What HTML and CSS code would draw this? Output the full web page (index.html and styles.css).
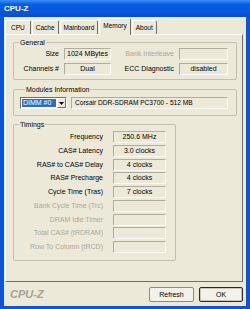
FILE: index.html
```html
<!DOCTYPE html>
<html lang="en">
<head>
    <meta charset="UTF-8">
    <meta name="viewport" content="width=device-width, initial-scale=1.0">
    <title>CPU-Z</title>
    <link rel="stylesheet" href="styles.css">
</head>
<body>
    <div class="window">
        <div class="titlebar">CPU-Z</div>
        <div class="client">
            <div class="tabs">
                <span class="tab cpu">CPU</span>
                <span class="tab">Cache</span>
                <span class="tab">Mainboard</span>
                <span class="tab active">Memory</span>
                <span class="tab">About</span>
            </div>
            <div class="panel">
                <fieldset class="group general">
                    <legend>General</legend>
                    <div class="general-grid">
                        <span class="lbl">Size</span>
                        <span class="val">1024 MBytes</span>
                        <span class="lbl off">Bank Interleave</span>
                        <span class="val"></span>
                        <span class="lbl">Channels #</span>
                        <span class="val">Dual</span>
                        <span class="lbl">ECC Diagnostic</span>
                        <span class="val">disabled</span>
                    </div>
                </fieldset>
                <fieldset class="group modules">
                    <legend>Modules Information</legend>
                    <div class="module-row">
                        <div class="select">
                            <span class="sel-text"><span class="sel-hi">DIMM #0</span></span>
                            <span class="sel-btn">
                                <svg width="5" height="3" viewBox="0 0 5 3"><path d="M0 0h5L2.5 3z" fill="#000"/></svg>
                            </span>
                        </div>
                        <span class="val part">Corsair DDR-SDRAM PC3700 - 512 MB</span>
                    </div>
                </fieldset>
                <fieldset class="group timings">
                    <legend>Timings</legend>
                    <div class="timing-grid">
                        <span class="lbl">Frequency</span><span class="val">250.6 MHz</span>
                        <span class="lbl">CAS# Latency</span><span class="val">3.0 clocks</span>
                        <span class="lbl">RAS# to CAS# Delay</span><span class="val">4 clocks</span>
                        <span class="lbl">RAS# Precharge</span><span class="val">4 clocks</span>
                        <span class="lbl">Cycle Time (Tras)</span><span class="val">7 clocks</span>
                        <span class="lbl off">Bank Cycle Time (Trc)</span><span class="val"></span>
                        <span class="lbl off">DRAM Idle Timer</span><span class="val"></span>
                        <span class="lbl off">Total CAS# (tRDRAM)</span><span class="val"></span>
                        <span class="lbl off">Row To Column (tRCD)</span><span class="val"></span>
                    </div>
                </fieldset>
            </div>
            <div class="footer">
                <span class="logo">CPU-Z</span>
                <button class="btn refresh">Refresh</button>
                <button class="btn ok">OK</button>
            </div>
        </div>
    </div>
</body>
</html>
```

FILE: styles.css
```css
body {
    margin: 0;
    font-family: "Liberation Sans", Arial, sans-serif;
    font-size: 7px;
    color: black;
}
.window {
    width: 250px;
    height: 309px;
    display: flex;
    flex-direction: column;
    background-color: #0b55d9;
}
.titlebar {
    height: 17px;
    line-height: 17px;
    padding-left: 4px;
    color: white;
    font-weight: bold;
    font-size: 8px;
    background: linear-gradient(#3d8ff8, #0b5ce4 25%, #0655dc 75%, #0a4cc8);
}
.client {
    flex: 1;
    margin: 0 4px 3px 4px;
    background-color: #ece9d8;
    display: flex;
    flex-direction: column;
}
.tabs {
    display: flex;
    align-items: flex-end;
    height: 17px;
    padding-left: 1px;
}
.tab {
    height: 13px;
    line-height: 13px;
    padding: 0 3px;
    font-size: 6.5px;
    border: 1px solid;
    border-color: white #716f64 transparent white;
    border-bottom: none;
    border-radius: 2px 2px 0 0;
    margin-right: 1px;
}
.tab.cpu {
    padding: 0 5px;
}
.tab.active {
    height: 16px;
    line-height: 14px;
    margin-bottom: -1px;
    background-color: #ece9d8;
    position: relative;
    z-index: 1;
}
.panel {
    height: 248px;
    margin: 0 3px 0 1px;
    border: 1px solid;
    border-color: white #716f64 #716f64 white;
    box-sizing: border-box;
    padding: 3px 5px 0 7px;
}
.group {
    margin: 0;
    border: 1px solid #c2bfb0;
    border-radius: 2px;
    padding: 0;
}
.group legend {
    padding: 0 1px;
    margin-left: 5px;
    line-height: 9px;
}
.general {
    padding: 1px 0 4px 0;
}
.general-grid {
    display: grid;
    grid-template-columns: 45px 47px 58px 49px;
    column-gap: 5px;
    row-gap: 3px;
}
.lbl {
    text-align: right;
    line-height: 12px;
    white-space: nowrap;
}
.lbl.off {
    color: #aca899;
}
.val {
    height: 12px;
    line-height: 10px;
    box-sizing: border-box;
    border: 1px solid;
    border-color: #b0ad9e #fbfaf6 #fbfaf6 #b0ad9e;
    text-align: center;
    white-space: nowrap;
}
.modules {
    margin-top: 5px;
    padding: 3px 0 6px 6px;
}
.module-row {
    display: flex;
    gap: 4px;
}
.select {
    width: 47px;
    height: 12px;
    box-sizing: border-box;
    border: 1px solid;
    border-color: #716f64 white white #716f64;
    background-color: white;
    display: flex;
}
.sel-text {
    flex: 1;
    padding: 1px;
}
.sel-hi {
    display: block;
    height: 8px;
    line-height: 8px;
    background-color: #316ac5;
    color: white;
    padding-left: 1px;
}
.sel-btn {
    width: 9px;
    box-sizing: border-box;
    border: 1px solid;
    border-color: white #716f64 #716f64 white;
    background-color: #ece9d8;
    display: flex;
    align-items: center;
    justify-content: center;
}
.val.part {
    width: 157px;
    text-align: left;
    padding-left: 3px;
    font-size: 6.6px;
}
.timings {
    width: 162px;
    box-sizing: border-box;
    margin-top: 4px;
    padding: 2px 9px 7px 0;
}
.timing-grid {
    display: grid;
    grid-template-columns: 89px 53px;
    column-gap: 10px;
    row-gap: 1.75px;
}
.footer {
    flex: 1;
    display: flex;
    align-items: center;
    padding: 0 3px;
}
.logo {
    flex: 1;
    color: #a5a296;
    font-weight: bold;
    font-style: italic;
    font-size: 11px;
    padding-left: 3px;
}
.btn {
    font-family: "Liberation Sans", Arial, sans-serif;
    font-size: 7px;
    height: 15px;
    padding: 0;
    background-color: #f2f1ea;
    border: 1px solid #8d8b80;
    border-radius: 2px;
    color: black;
}
.refresh {
    width: 45px;
    margin-right: 5px;
}
.ok {
    width: 44px;
    border-color: #2a2a2a;
    box-shadow: inset 0 0 0 1px #c9c6b8;
}
```
